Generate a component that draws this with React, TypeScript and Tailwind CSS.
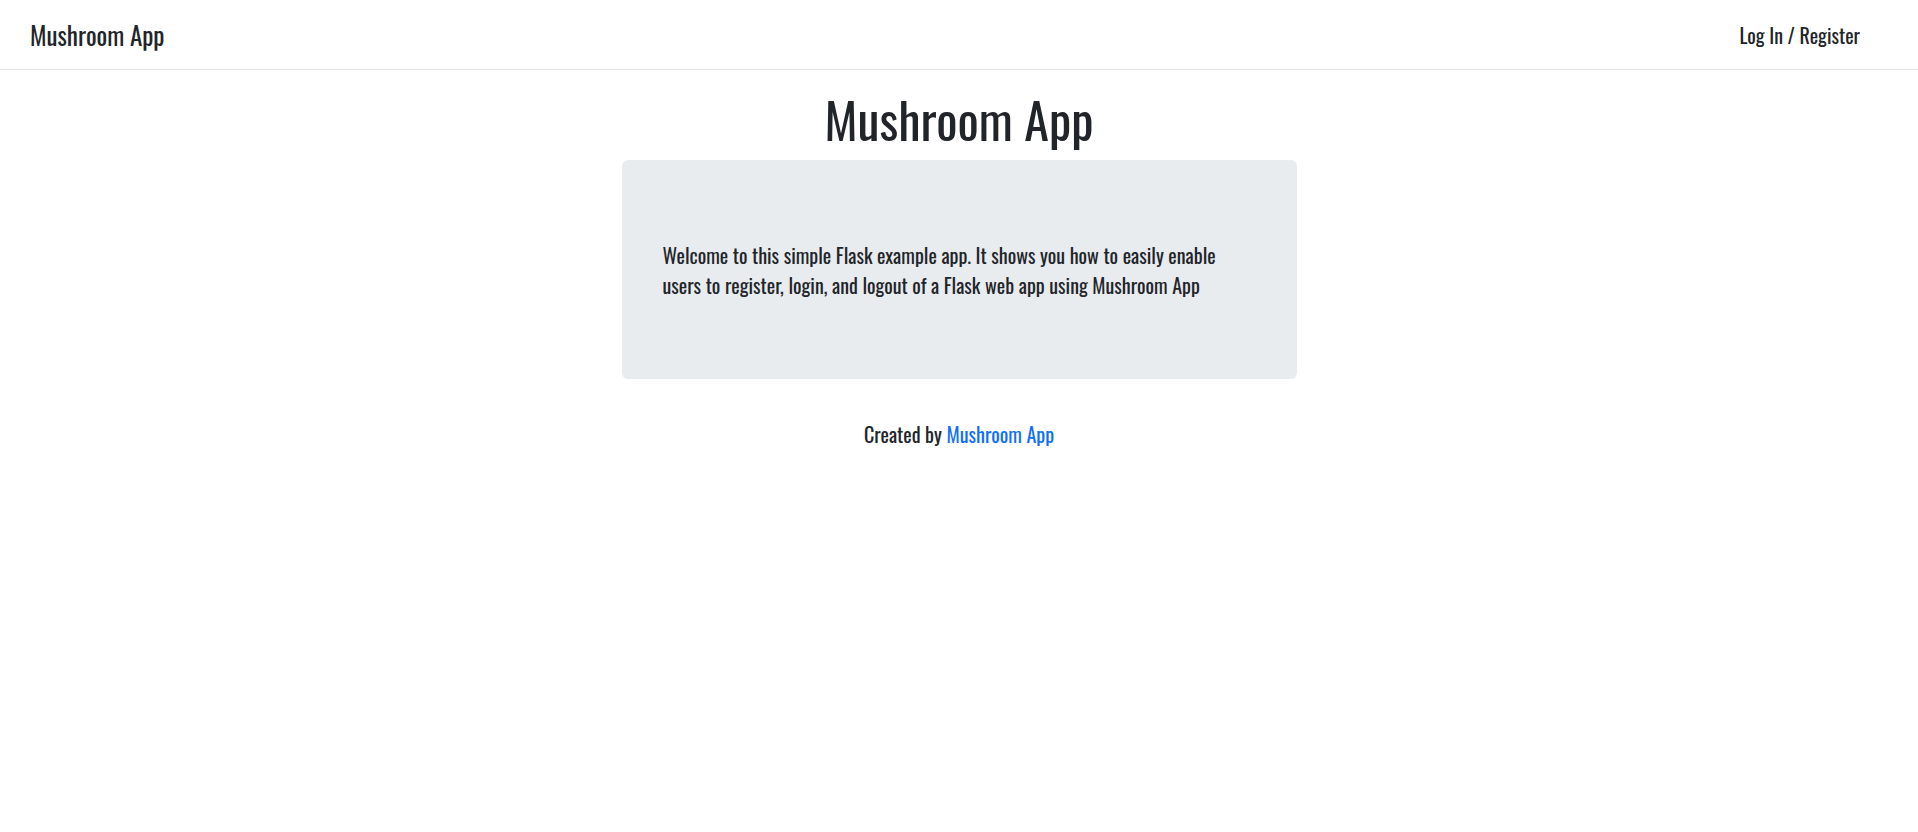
export default function App() {
  return (
    <div className="min-h-screen bg-white font-['Oswald',sans-serif] text-[#212529]">
      <nav className="h-[70px] border-b border-[#dee2e6] flex items-center justify-between px-[30px]">
        <a href="#" className="text-[25px] leading-none">
          Mushroom App
        </a>
        <a href="#" className="text-[20px] leading-none mr-[28px]">
          Log In / Register
        </a>
      </nav>

      <main className="flex flex-col items-center">
        <h1 className="mt-[18px] text-[50px] font-normal leading-[60px]">Mushroom App</h1>
        <div className="mt-[12px] w-[675px] h-[219px] bg-[#e9ecef] rounded-md flex items-center pl-[41px] pr-[60px]">
          <p className="text-[20px] leading-[30px]">
            Welcome to this simple Flask example app. It shows you how to easily enable users to register, login, and
            logout of a Flask web app using Mushroom App
          </p>
        </div>
        <p className="mt-[40px] text-[20px] leading-[30px]">
          Created by{" "}
          <a href="#" className="text-[#0d6efd]">
            Mushroom App
          </a>
        </p>
      </main>
    </div>
  );
}
